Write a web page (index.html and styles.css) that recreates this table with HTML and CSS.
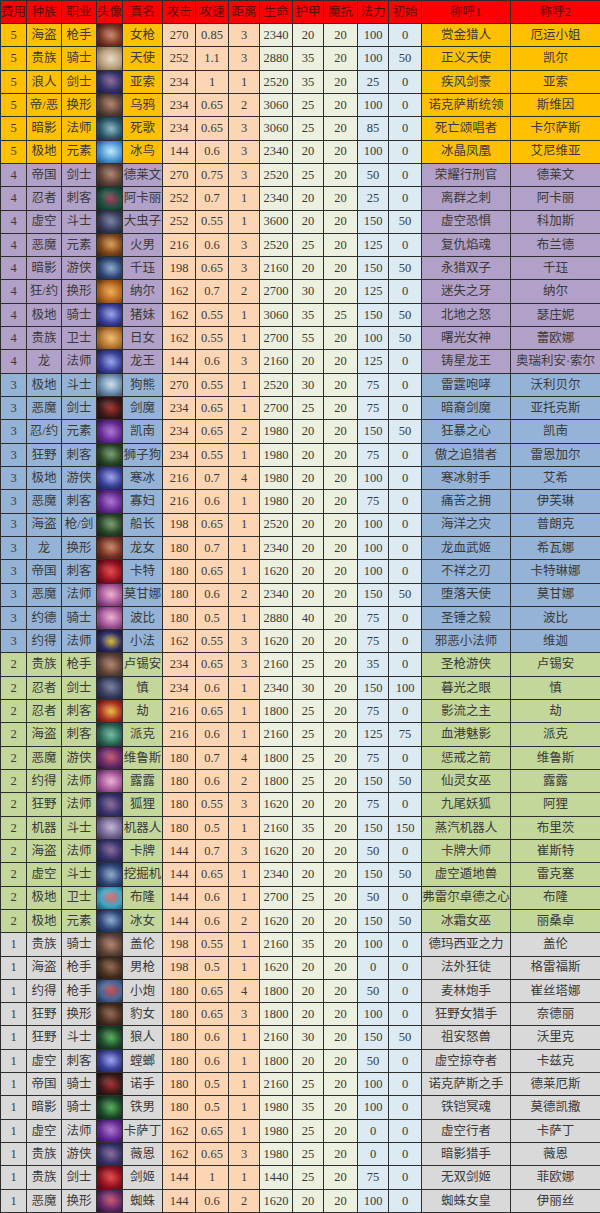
FILE: index.html
```html
<!DOCTYPE html>
<html lang="zh-CN">
<head>
<meta charset="utf-8">
<title>英雄属性表</title>
<link rel="stylesheet" href="styles.css">
</head>
<body>
<table class="sheet">
<colgroup>
<col class="w-cost"><col class="w-race"><col class="w-cls"><col class="w-av"><col class="w-name">
<col class="w-atk"><col class="w-as"><col class="w-rng"><col class="w-hp"><col class="w-ar"><col class="w-mr"><col class="w-mp"><col class="w-init">
<col class="w-t1"><col class="w-t2">
</colgroup>
<thead>
<tr><th>费用</th><th>种族</th><th>职业</th><th>头像</th><th>真名</th><th>攻击</th><th>攻速</th><th>距离</th><th>生命</th><th>护甲</th><th>魔抗</th><th>法力</th><th>初始</th><th>称呼1</th><th>称呼2</th></tr>
</thead>
<tbody>
<tr class="c5"><td>5</td><td>海盗</td><td>枪手</td><td class="av a-rust"></td><td>女枪</td><td>270</td><td>0.85</td><td>3</td><td>2340</td><td>20</td><td>20</td><td>100</td><td>0</td><td>赏金猎人</td><td>厄运小姐</td></tr>
<tr class="c5"><td>5</td><td>贵族</td><td>骑士</td><td class="av a-cream"></td><td>天使</td><td>252</td><td>1.1</td><td>3</td><td>2880</td><td>35</td><td>20</td><td>100</td><td>50</td><td>正义天使</td><td>凯尔</td></tr>
<tr class="c5"><td>5</td><td>浪人</td><td>剑士</td><td class="av a-indigo"></td><td>亚索</td><td>234</td><td>1</td><td>1</td><td>2520</td><td>35</td><td>20</td><td>25</td><td>0</td><td>疾风剑豪</td><td>亚索</td></tr>
<tr class="c5"><td>5</td><td>帝/恶</td><td>换形</td><td class="av a-brown"></td><td>乌鸦</td><td>234</td><td>0.65</td><td>2</td><td>3060</td><td>25</td><td>20</td><td>100</td><td>0</td><td>诺克萨斯统领</td><td>斯维因</td></tr>
<tr class="c5"><td>5</td><td>暗影</td><td>法师</td><td class="av a-teal"></td><td>死歌</td><td>234</td><td>0.65</td><td>3</td><td>3060</td><td>25</td><td>20</td><td>85</td><td>0</td><td>死亡颂唱者</td><td>卡尔萨斯</td></tr>
<tr class="c5"><td>5</td><td>极地</td><td>元素</td><td class="av a-ice"></td><td>冰鸟</td><td>144</td><td>0.6</td><td>3</td><td>2340</td><td>20</td><td>20</td><td>100</td><td>0</td><td>冰晶凤凰</td><td>艾尼维亚</td></tr>
<tr class="c4"><td>4</td><td>帝国</td><td>剑士</td><td class="av a-brown"></td><td>德莱文</td><td>270</td><td>0.75</td><td>3</td><td>2520</td><td>25</td><td>20</td><td>50</td><td>0</td><td>荣耀行刑官</td><td>德莱文</td></tr>
<tr class="c4"><td>4</td><td>忍者</td><td>刺客</td><td class="av a-jade"></td><td>阿卡丽</td><td>252</td><td>0.7</td><td>1</td><td>2340</td><td>20</td><td>20</td><td>25</td><td>0</td><td>离群之刺</td><td>阿卡丽</td></tr>
<tr class="c4"><td>4</td><td>虚空</td><td>斗士</td><td class="av a-slate"></td><td>大虫子</td><td>252</td><td>0.55</td><td>1</td><td>3600</td><td>20</td><td>20</td><td>150</td><td>50</td><td>虚空恐惧</td><td>科加斯</td></tr>
<tr class="c4"><td>4</td><td>恶魔</td><td>元素</td><td class="av a-amber"></td><td>火男</td><td>216</td><td>0.6</td><td>3</td><td>2520</td><td>25</td><td>20</td><td>125</td><td>0</td><td>复仇焰魂</td><td>布兰德</td></tr>
<tr class="c4"><td>4</td><td>暗影</td><td>游侠</td><td class="av a-navy"></td><td>千珏</td><td>198</td><td>0.65</td><td>3</td><td>2160</td><td>20</td><td>20</td><td>150</td><td>50</td><td>永猎双子</td><td>千珏</td></tr>
<tr class="c4"><td>4</td><td>狂/约</td><td>换形</td><td class="av a-orange"></td><td>纳尔</td><td>162</td><td>0.7</td><td>2</td><td>2700</td><td>30</td><td>20</td><td>125</td><td>0</td><td>迷失之牙</td><td>纳尔</td></tr>
<tr class="c4"><td>4</td><td>极地</td><td>骑士</td><td class="av a-royal"></td><td>猪妹</td><td>162</td><td>0.55</td><td>1</td><td>3060</td><td>35</td><td>25</td><td>150</td><td>50</td><td>北地之怒</td><td>瑟庄妮</td></tr>
<tr class="c4"><td>4</td><td>贵族</td><td>卫士</td><td class="av a-gold"></td><td>日女</td><td>162</td><td>0.55</td><td>1</td><td>2700</td><td>55</td><td>20</td><td>100</td><td>50</td><td>曙光女神</td><td>蕾欧娜</td></tr>
<tr class="c4"><td>4</td><td>龙</td><td>法师</td><td class="av a-royal"></td><td>龙王</td><td>144</td><td>0.6</td><td>3</td><td>2160</td><td>20</td><td>20</td><td>125</td><td>0</td><td>铸星龙王</td><td>奥瑞利安·索尔</td></tr>
<tr class="c3"><td>3</td><td>极地</td><td>斗士</td><td class="av a-frost"></td><td>狗熊</td><td>270</td><td>0.55</td><td>1</td><td>2520</td><td>30</td><td>20</td><td>75</td><td>0</td><td>雷霆咆哮</td><td>沃利贝尔</td></tr>
<tr class="c3"><td>3</td><td>恶魔</td><td>剑士</td><td class="av a-blood"></td><td>剑魔</td><td>234</td><td>0.65</td><td>1</td><td>2700</td><td>25</td><td>20</td><td>75</td><td>0</td><td>暗裔剑魔</td><td>亚托克斯</td></tr>
<tr class="c3"><td>3</td><td>忍/约</td><td>元素</td><td class="av a-violet"></td><td>凯南</td><td>234</td><td>0.65</td><td>2</td><td>1980</td><td>20</td><td>20</td><td>150</td><td>50</td><td>狂暴之心</td><td>凯南</td></tr>
<tr class="c3"><td>3</td><td>狂野</td><td>刺客</td><td class="av a-moss"></td><td>狮子狗</td><td>234</td><td>0.55</td><td>1</td><td>1980</td><td>20</td><td>20</td><td>75</td><td>0</td><td>傲之追猎者</td><td>雷恩加尔</td></tr>
<tr class="c3"><td>3</td><td>极地</td><td>游侠</td><td class="av a-royal"></td><td>寒冰</td><td>216</td><td>0.7</td><td>4</td><td>1980</td><td>20</td><td>20</td><td>100</td><td>0</td><td>寒冰射手</td><td>艾希</td></tr>
<tr class="c3"><td>3</td><td>恶魔</td><td>刺客</td><td class="av a-violet"></td><td>寡妇</td><td>216</td><td>0.6</td><td>1</td><td>1980</td><td>20</td><td>20</td><td>75</td><td>0</td><td>痛苦之拥</td><td>伊芙琳</td></tr>
<tr class="c3"><td>3</td><td>海盗</td><td>枪/剑</td><td class="av a-moss"></td><td>船长</td><td>198</td><td>0.65</td><td>1</td><td>2520</td><td>20</td><td>20</td><td>100</td><td>0</td><td>海洋之灾</td><td>普朗克</td></tr>
<tr class="c3"><td>3</td><td>龙</td><td>换形</td><td class="av a-rust"></td><td>龙女</td><td>180</td><td>0.7</td><td>1</td><td>2340</td><td>20</td><td>20</td><td>100</td><td>0</td><td>龙血武姬</td><td>希瓦娜</td></tr>
<tr class="c3"><td>3</td><td>帝国</td><td>刺客</td><td class="av a-crimson"></td><td>卡特</td><td>180</td><td>0.65</td><td>1</td><td>1620</td><td>20</td><td>20</td><td>100</td><td>0</td><td>不祥之刃</td><td>卡特琳娜</td></tr>
<tr class="c3"><td>3</td><td>恶魔</td><td>法师</td><td class="av a-pink"></td><td>莫甘娜</td><td>180</td><td>0.6</td><td>2</td><td>2340</td><td>20</td><td>20</td><td>150</td><td>50</td><td>堕落天使</td><td>莫甘娜</td></tr>
<tr class="c3"><td>3</td><td>约德</td><td>骑士</td><td class="av a-pink"></td><td>波比</td><td>180</td><td>0.5</td><td>1</td><td>2880</td><td>40</td><td>20</td><td>75</td><td>0</td><td>圣锤之毅</td><td>波比</td></tr>
<tr class="c3"><td>3</td><td>约得</td><td>法师</td><td class="av a-night"></td><td>小法</td><td>162</td><td>0.55</td><td>3</td><td>1620</td><td>20</td><td>20</td><td>75</td><td>0</td><td>邪恶小法师</td><td>维迦</td></tr>
<tr class="c2"><td>2</td><td>贵族</td><td>枪手</td><td class="av a-brown"></td><td>卢锡安</td><td>234</td><td>0.65</td><td>3</td><td>2160</td><td>25</td><td>20</td><td>35</td><td>0</td><td>圣枪游侠</td><td>卢锡安</td></tr>
<tr class="c2"><td>2</td><td>忍者</td><td>剑士</td><td class="av a-slate"></td><td>慎</td><td>234</td><td>0.6</td><td>1</td><td>2340</td><td>30</td><td>20</td><td>150</td><td>100</td><td>暮光之眼</td><td>慎</td></tr>
<tr class="c2"><td>2</td><td>忍者</td><td>刺客</td><td class="av a-fire"></td><td>劫</td><td>216</td><td>0.65</td><td>1</td><td>1800</td><td>25</td><td>20</td><td>75</td><td>0</td><td>影流之主</td><td>劫</td></tr>
<tr class="c2"><td>2</td><td>海盗</td><td>刺客</td><td class="av a-sea"></td><td>派克</td><td>216</td><td>0.6</td><td>1</td><td>2160</td><td>25</td><td>20</td><td>125</td><td>75</td><td>血港魅影</td><td>派克</td></tr>
<tr class="c2"><td>2</td><td>恶魔</td><td>游侠</td><td class="av a-plum"></td><td>维鲁斯</td><td>180</td><td>0.7</td><td>4</td><td>1800</td><td>25</td><td>20</td><td>75</td><td>0</td><td>惩戒之箭</td><td>维鲁斯</td></tr>
<tr class="c2"><td>2</td><td>约得</td><td>法师</td><td class="av a-pink"></td><td>露露</td><td>180</td><td>0.6</td><td>2</td><td>1800</td><td>25</td><td>20</td><td>150</td><td>50</td><td>仙灵女巫</td><td>露露</td></tr>
<tr class="c2"><td>2</td><td>狂野</td><td>法师</td><td class="av a-indigo"></td><td>狐狸</td><td>180</td><td>0.55</td><td>3</td><td>1620</td><td>20</td><td>20</td><td>75</td><td>0</td><td>九尾妖狐</td><td>阿狸</td></tr>
<tr class="c2"><td>2</td><td>机器</td><td>斗士</td><td class="av a-lilac"></td><td>机器人</td><td>180</td><td>0.5</td><td>1</td><td>2160</td><td>35</td><td>20</td><td>150</td><td>150</td><td>蒸汽机器人</td><td>布里茨</td></tr>
<tr class="c2"><td>2</td><td>海盗</td><td>法师</td><td class="av a-indigo"></td><td>卡牌</td><td>144</td><td>0.7</td><td>3</td><td>1620</td><td>20</td><td>20</td><td>50</td><td>0</td><td>卡牌大师</td><td>崔斯特</td></tr>
<tr class="c2"><td>2</td><td>虚空</td><td>斗士</td><td class="av a-navy"></td><td>挖掘机</td><td>144</td><td>0.65</td><td>1</td><td>2340</td><td>20</td><td>20</td><td>150</td><td>50</td><td>虚空遁地兽</td><td>雷克塞</td></tr>
<tr class="c2"><td>2</td><td>极地</td><td>卫士</td><td class="av a-cyan"></td><td>布隆</td><td>144</td><td>0.6</td><td>1</td><td>2700</td><td>25</td><td>20</td><td>50</td><td>0</td><td>弗雷尔卓德之心</td><td>布隆</td></tr>
<tr class="c2"><td>2</td><td>极地</td><td>元素</td><td class="av a-navy"></td><td>冰女</td><td>144</td><td>0.6</td><td>2</td><td>1620</td><td>20</td><td>20</td><td>150</td><td>50</td><td>冰霜女巫</td><td>丽桑卓</td></tr>
<tr class="c1"><td>1</td><td>贵族</td><td>骑士</td><td class="av a-brown"></td><td>盖伦</td><td>198</td><td>0.55</td><td>1</td><td>2160</td><td>35</td><td>20</td><td>100</td><td>0</td><td>德玛西亚之力</td><td>盖伦</td></tr>
<tr class="c1"><td>1</td><td>海盗</td><td>枪手</td><td class="av a-umber"></td><td>男枪</td><td>198</td><td>0.5</td><td>1</td><td>1620</td><td>20</td><td>20</td><td>0</td><td>0</td><td>法外狂徒</td><td>格雷福斯</td></tr>
<tr class="c1"><td>1</td><td>约得</td><td>枪手</td><td class="av a-steel"></td><td>小炮</td><td>180</td><td>0.65</td><td>4</td><td>1800</td><td>20</td><td>20</td><td>50</td><td>0</td><td>麦林炮手</td><td>崔丝塔娜</td></tr>
<tr class="c1"><td>1</td><td>狂野</td><td>换形</td><td class="av a-umber"></td><td>豹女</td><td>180</td><td>0.65</td><td>3</td><td>1800</td><td>20</td><td>20</td><td>100</td><td>0</td><td>狂野女猎手</td><td>奈德丽</td></tr>
<tr class="c1"><td>1</td><td>狂野</td><td>斗士</td><td class="av a-toxic"></td><td>狼人</td><td>180</td><td>0.6</td><td>1</td><td>2160</td><td>30</td><td>20</td><td>150</td><td>50</td><td>祖安怒兽</td><td>沃里克</td></tr>
<tr class="c1"><td>1</td><td>虚空</td><td>刺客</td><td class="av a-royal"></td><td>螳螂</td><td>180</td><td>0.6</td><td>1</td><td>1800</td><td>20</td><td>20</td><td>50</td><td>0</td><td>虚空掠夺者</td><td>卡兹克</td></tr>
<tr class="c1"><td>1</td><td>帝国</td><td>骑士</td><td class="av a-blood"></td><td>诺手</td><td>180</td><td>0.5</td><td>1</td><td>2160</td><td>25</td><td>20</td><td>100</td><td>0</td><td>诺克萨斯之手</td><td>德莱厄斯</td></tr>
<tr class="c1"><td>1</td><td>暗影</td><td>骑士</td><td class="av a-toxic"></td><td>铁男</td><td>180</td><td>0.5</td><td>1</td><td>1980</td><td>35</td><td>20</td><td>100</td><td>0</td><td>铁铠冥魂</td><td>莫德凯撒</td></tr>
<tr class="c1"><td>1</td><td>虚空</td><td>法师</td><td class="av a-violet"></td><td>卡萨丁</td><td>162</td><td>0.65</td><td>1</td><td>1980</td><td>25</td><td>20</td><td>0</td><td>0</td><td>虚空行者</td><td>卡萨丁</td></tr>
<tr class="c1"><td>1</td><td>贵族</td><td>游侠</td><td class="av a-indigo"></td><td>薇恩</td><td>162</td><td>0.65</td><td>3</td><td>1980</td><td>25</td><td>20</td><td>0</td><td>0</td><td>暗影猎手</td><td>薇恩</td></tr>
<tr class="c1"><td>1</td><td>贵族</td><td>剑士</td><td class="av a-crimson"></td><td>剑姬</td><td>144</td><td>1</td><td>1</td><td>1440</td><td>25</td><td>20</td><td>75</td><td>0</td><td>无双剑姬</td><td>菲欧娜</td></tr>
<tr class="c1"><td>1</td><td>恶魔</td><td>换形</td><td class="av a-plum"></td><td>蜘蛛</td><td>144</td><td>0.6</td><td>2</td><td>1620</td><td>20</td><td>20</td><td>100</td><td>0</td><td>蜘蛛女皇</td><td>伊丽丝</td></tr>
</tbody>
</table>
</body>
</html>
```
FILE: styles.css
```css
html, body {
  margin: 0;
  padding: 0;
  background: #ffffff;
}

.sheet {
  width: 600px;
  height: 1213px;
  border-collapse: collapse;
  table-layout: fixed;
  font-family: "Liberation Serif", "Noto Sans CJK SC", serif;
  font-size: 12.5px;
  color: #3a3a3a;
}

.w-cost { width: 26px; }
.w-race { width: 35px; }
.w-cls { width: 35px; }
.w-av { width: 26px; }
.w-name { width: 40px; }
.w-atk { width: 33px; }
.w-as { width: 33px; }
.w-rng { width: 31px; }
.w-hp { width: 33px; }
.w-ar { width: 31px; }
.w-mr { width: 34px; }
.w-mp { width: 31px; }
.w-init { width: 33px; }
.w-t1 { width: 89px; }
.w-t2 { width: 90px; }

.sheet th,
.sheet td {
  border: 1px solid #2e2e2e;
  padding: 0;
  text-align: center;
  vertical-align: middle;
  line-height: 1;
  white-space: nowrap;
  overflow: hidden;
}

.sheet thead th {
  height: 22px;
  background: #ff0000;
  color: #5e0606;
  font-weight: normal;
}

tr.c5 td { background: #ffc000; }
tr.c4 td { background: #b1a0c7; }
tr.c3 td { background: #95b3d7; }
tr.c2 td { background: #c4d79b; }
tr.c1 td { background: #d9d9d9; }

tbody td:nth-child(n+6):nth-child(-n+8) { background: #fcd5b4; }
tbody td:nth-child(n+9):nth-child(-n+11) { background: #ebf1de; }
tbody td:nth-child(n+12):nth-child(-n+13) { background: #dbeaf3; }

tbody tr td.av {
  background:
    radial-gradient(ellipse 40% 30% at 35% 30%, rgba(255, 255, 255, 0.12), rgba(255, 255, 255, 0)),
    radial-gradient(ellipse 85% 80% at 55% 50%, var(--hi) 0%, var(--mid) 50%, var(--lo) 100%);
}

.a-rust { --hi: #c98a6c; --mid: #7a3422; --lo: #2a0c08; }
.a-cream { --hi: #eadcc2; --mid: #b89e7a; --lo: #5a4a34; }
.a-indigo { --hi: #8a6c98; --mid: #36306a; --lo: #141430; }
.a-brown { --hi: #b4856e; --mid: #5e4238; --lo: #201818; }
.a-teal { --hi: #8cbcc6; --mid: #28566a; --lo: #0a1a22; }
.a-ice { --hi: #c4e8fa; --mid: #4a98d6; --lo: #143462; }
.a-jade { --hi: #a83c58; --mid: #1a5040; --lo: #0a1a14; }
.a-slate { --hi: #7a82a2; --mid: #363c5a; --lo: #101420; }
.a-amber { --hi: #dca05a; --mid: #804618; --lo: #2a1408; }
.a-navy { --hi: #8eaed0; --mid: #2e4678; --lo: #0a1428; }
.a-orange { --hi: #eab058; --mid: #b4641a; --lo: #402008; }
.a-royal { --hi: #9ca6ee; --mid: #383e98; --lo: #101038; }
.a-gold { --hi: #f2c070; --mid: #b4722c; --lo: #4a2a10; }
.a-frost { --hi: #d0e2f2; --mid: #6a8cac; --lo: #203040; }
.a-blood { --hi: #a83030; --mid: #3c1818; --lo: #100808; }
.a-violet { --hi: #b074d0; --mid: #622894; --lo: #200a30; }
.a-moss { --hi: #7ca072; --mid: #284628; --lo: #0a140a; }
.a-crimson { --hi: #e84848; --mid: #901020; --lo: #2a0408; }
.a-pink { --hi: #eeb2d2; --mid: #a45498; --lo: #3a1040; }
.a-night { --hi: #d8bc3c; --mid: #2a2a66; --lo: #0a0a20; }
.a-fire { --hi: #ecc040; --mid: #a82e20; --lo: #300808; }
.a-sea { --hi: #72c0a2; --mid: #286456; --lo: #0a1a18; }
.a-plum { --hi: #cc5874; --mid: #642866; --lo: #1a0a20; }
.a-lilac { --hi: #c6b6d8; --mid: #726494; --lo: #2a2030; }
.a-cyan { --hi: #e86666; --mid: #3ea6c6; --lo: #104050; }
.a-umber { --hi: #946850; --mid: #462e20; --lo: #140c08; }
.a-steel { --hi: #cc4c4c; --mid: #46669a; --lo: #101a30; }
.a-toxic { --hi: #58b058; --mid: #1a482a; --lo: #060e08; }
```
